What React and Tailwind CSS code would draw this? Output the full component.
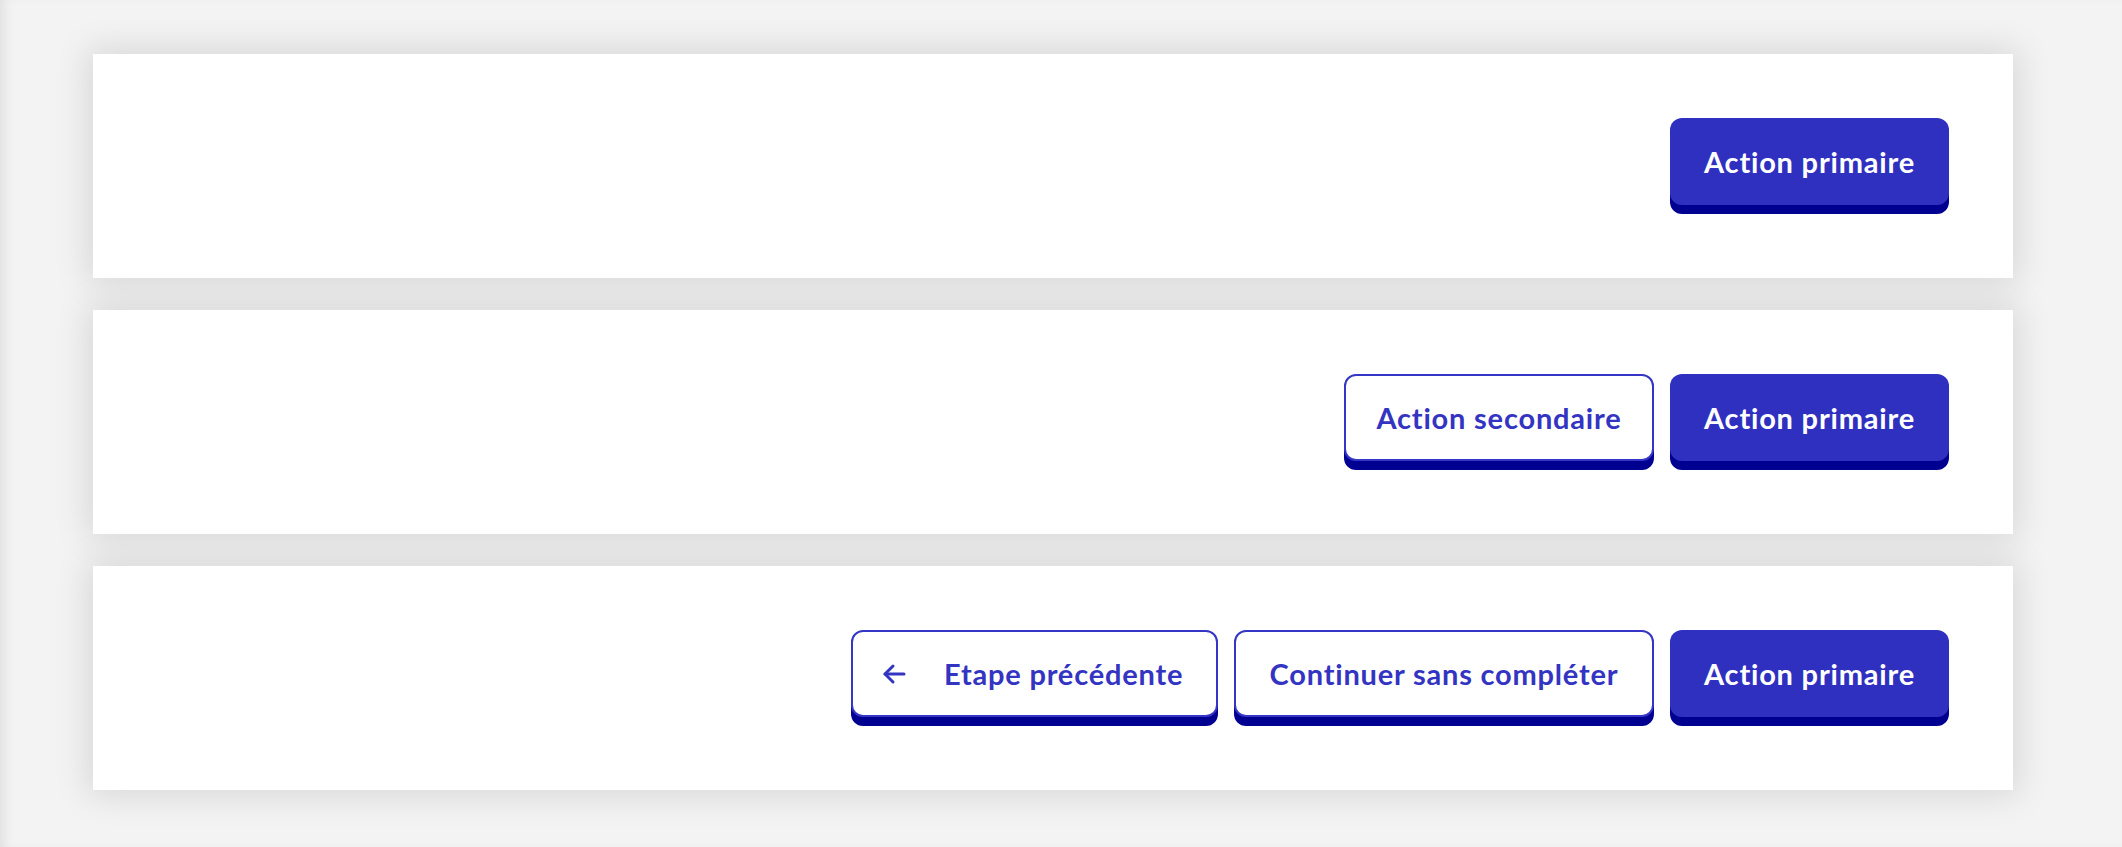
const FONT = { fontFamily: 'Lato, "Open Sans", sans-serif' };

function ArrowIcon() {
  return (
    <svg width="24" height="22" viewBox="0 0 24 22" fill="none" stroke="currentColor" strokeWidth="3" strokeLinecap="round" strokeLinejoin="round" className="mr-[38px] shrink-0">
      <path d="M22 11H3" />
      <path d="M11 3l-8 8 8 8" />
    </svg>
  );
}

function PrimaryButton({ children }) {
  return (
    <button className="h-[87px] w-[279px] mb-[9px] rounded-[12px] bg-[#3030c0] text-white text-[29px] tracking-[0.8px] font-bold shadow-[0_9px_0_0_#000091]">
      {children}
    </button>
  );
}

function SecondaryButton({ children, width, icon }) {
  return (
    <button
      className={`h-[87px] mb-[9px] rounded-[12px] bg-white border-2 border-[#3636c6] text-[#3434c2] text-[29px] tracking-[0.8px] font-bold shadow-[0_9px_0_0_#000091] flex items-center ${icon ? 'justify-start pl-[29px]' : 'justify-center'} ${width}`}
    >
      {icon}
      {children}
    </button>
  );
}

function Card({ children }) {
  return (
    <div className="w-[1920px] h-[224px] bg-white shadow-[0_0_32px_6px_rgba(0,0,0,0.11)] flex items-center justify-end pr-[64px] gap-4">
      {children}
    </div>
  );
}

export default function App() {
  return (
    <div
      className="min-h-[847px] w-[2122px] bg-[#f3f3f3] shadow-[inset_10px_0_14px_-8px_rgba(0,0,0,0.1)] pl-[93px] pt-[54px] flex flex-col gap-[32px]"
      style={FONT}
    >
      <Card>
        <PrimaryButton>Action primaire</PrimaryButton>
      </Card>
      <Card>
        <SecondaryButton width="w-[310px]">Action secondaire</SecondaryButton>
        <PrimaryButton>Action primaire</PrimaryButton>
      </Card>
      <Card>
        <SecondaryButton width="w-[367px]" icon={<ArrowIcon />}>
          Etape précédente
        </SecondaryButton>
        <SecondaryButton width="w-[420px]">Continuer sans compléter</SecondaryButton>
        <PrimaryButton>Action primaire</PrimaryButton>
      </Card>
    </div>
  );
}
